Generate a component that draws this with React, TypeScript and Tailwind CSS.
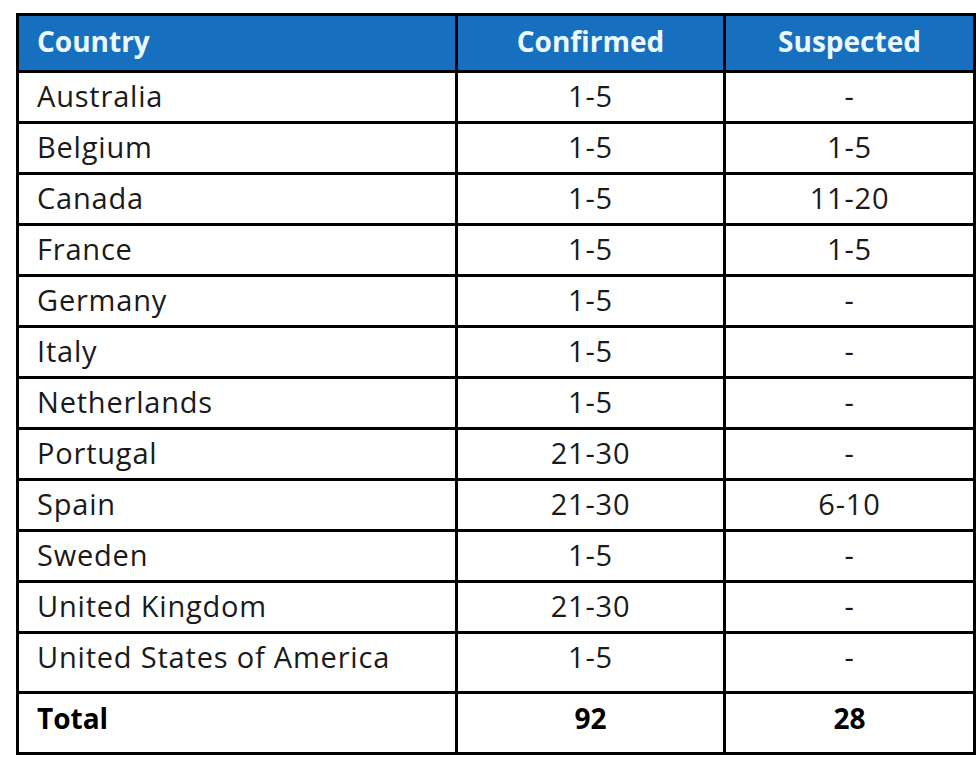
const rows: [string, string, string][] = [
  ["Australia", "1-5", "-"],
  ["Belgium", "1-5", "1-5"],
  ["Canada", "1-5", "11-20"],
  ["France", "1-5", "1-5"],
  ["Germany", "1-5", "-"],
  ["Italy", "1-5", "-"],
  ["Netherlands", "1-5", "-"],
  ["Portugal", "21-30", "-"],
  ["Spain", "21-30", "6-10"],
  ["Sweden", "1-5", "-"],
  ["United Kingdom", "21-30", "-"],
  ["United States of America", "1-5", "-"],
];

export default function App() {
  return (
    <div
      className="w-[980px] h-[770px] bg-white pt-[13px] pl-[16px]"
      style={{ fontFamily: "'Open Sans', sans-serif" }}
    >
      <table className="table-fixed w-[957px] border-collapse border-[3px] border-black text-[28px] leading-none">
        <colgroup>
          <col className="w-[439px]" />
          <col className="w-[268px]" />
          <col className="w-[250px]" />
        </colgroup>
        <thead>
          <tr className="h-[57px] bg-[#1670bf] text-[#ecf8ff]">
            <th className="border-[3px] border-black text-left pl-[18px] pb-[4px] font-bold">Country</th>
            <th className="border-[3px] border-black text-center pb-[4px] font-bold">Confirmed</th>
            <th className="border-[3px] border-black text-center pb-[4px] font-bold">Suspected</th>
          </tr>
        </thead>
        <tbody className="text-[#1a1a1a] text-[29px] tracking-[0.8px]">
          {rows.map(([country, confirmed, suspected], i) => {
            const last = i === rows.length - 1;
            return (
              <tr key={country} className={last ? "h-[60px]" : "h-[51px]"}>
                <td className="border-[3px] border-black align-top pl-[18px] pt-[8px]">{country}</td>
                <td className="border-[3px] border-black align-top text-center pt-[8px]">{confirmed}</td>
                <td className="border-[3px] border-black align-top text-center pt-[8px]">{suspected}</td>
              </tr>
            );
          })}
          <tr className="h-[61px] font-bold text-black text-[28px] tracking-normal">
            <td className="border-[3px] border-black align-top pl-[18px] pt-[10px]">Total</td>
            <td className="border-[3px] border-black align-top text-center pt-[10px]">92</td>
            <td className="border-[3px] border-black align-top text-center pt-[10px]">28</td>
          </tr>
        </tbody>
      </table>
    </div>
  );
}
